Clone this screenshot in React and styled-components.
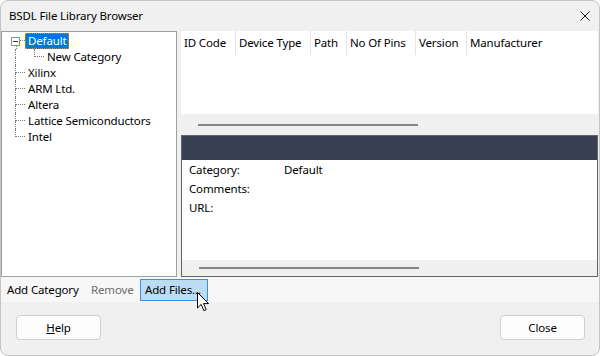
import React from "react";
import styled, { createGlobalStyle } from "styled-components";

const GlobalStyle = createGlobalStyle`
  html, body {
    margin: 0;
    padding: 0;
    background: #ffffff;
  }
  body {
    font-family: "Noto Sans", "Open Sans", sans-serif;
    font-size: 11.5px;
    letter-spacing: -0.15px;
    color: #000000;
  }
  * {
    box-sizing: border-box;
  }
`;

const columns = [
  { title: "ID Code", width: 55 },
  { title: "Device Type", width: 75 },
  { title: "Path", width: 36 },
  { title: "No Of Pins", width: 69 },
  { title: "Version", width: 51 },
  { title: "Manufacturer", width: 0 },
];

const topItems = ["Xilinx", "ARM Ltd.", "Altera", "Lattice Semiconductors", "Intel"];

const details = [
  { label: "Category:", value: "Default" },
  { label: "Comments:", value: "" },
  { label: "URL:", value: "" },
];

const App = () => {
  return (
    <>
      <GlobalStyle />
      <Window>
        <TitleBar>
          <Title>BSDL File Library Browser</Title>
          <CloseGlyph viewBox="0 0 10 10" aria-label="close">
            <path d="M0.5 0.5 L9.5 9.5 M9.5 0.5 L0.5 9.5" />
          </CloseGlyph>
        </TitleBar>

        <Main>
          <TreePanel>
            <TreeRow>
              <BoxCell>
                <ExpandBox>
                  <Minus />
                </ExpandBox>
                <Stem />
              </BoxCell>
              <Stub />
              <Label selected>Default</Label>
            </TreeRow>
            <TreeRow>
              <Gutter $indent={13}>
                <HalfTop $pipe />
                <HalfBottom $pipe />
              </Gutter>
              <Gutter $indent={9}>
                <HalfTop $pipe $branch />
                <HalfBottom />
              </Gutter>
              <Label>New Category</Label>
            </TreeRow>
            {topItems.map((name, i) => (
              <TreeRow key={name}>
                <Gutter $indent={13}>
                  <HalfTop $pipe $branch />
                  <HalfBottom $pipe={i < topItems.length - 1} />
                </Gutter>
                <Label>{name}</Label>
              </TreeRow>
            ))}
          </TreePanel>

          <RightPane>
            <ListView>
              <HeaderRow>
                {columns.map((c) => (
                  <HeaderCell key={c.title} $width={c.width}>
                    {c.title}
                  </HeaderCell>
                ))}
              </HeaderRow>
            </ListView>
            <ScrollStrip $height={21}>
              <Thumb />
            </ScrollStrip>

            <DetailPanel>
              <DetailHeader />
              <DetailBody>
                {details.map((d) => (
                  <DetailRow key={d.label}>
                    <DetailLabel>{d.label}</DetailLabel>
                    <span>{d.value}</span>
                  </DetailRow>
                ))}
              </DetailBody>
              <ScrollStrip $height={16}>
                <Thumb />
              </ScrollStrip>
            </DetailPanel>
          </RightPane>
        </Main>

        <Toolbar>
          <ToolItem $width={84}>Add Category</ToolItem>
          <ToolItem $width={54} disabled>
            Remove
          </ToolItem>
          <ToolItem $width={68} $hot>
            Add Files...
            <Cursor viewBox="0 0 13 20">
              <path d="M0.5 0.5 L0.5 16 L4.2 12.4 L6.8 18.6 L9.2 17.6 L6.6 11.6 L11.6 11.6 Z" />
            </Cursor>
          </ToolItem>
        </Toolbar>

        <Footer>
          <DialogButton>
            <u>H</u>elp
          </DialogButton>
          <DialogButton>Close</DialogButton>
        </Footer>
      </Window>
    </>
  );
};

const Window = styled.div`
  width: 600px;
  height: 356px;
  background: #f0f0f0;
  border: 1px solid #c4c4c4;
  border-radius: 8px;
  display: flex;
  flex-direction: column;
  overflow: hidden;
`;

const TitleBar = styled.div`
  height: 30px;
  flex: none;
  display: flex;
  align-items: center;
  justify-content: space-between;
  padding: 0 9px 1px 8px;
`;

const Title = styled.span`
  font-size: 11.5px;
`;

const CloseGlyph = styled.svg`
  width: 10px;
  height: 10px;
  stroke: #1a1a1a;
  stroke-width: 1;
  fill: none;
`;

const Main = styled.div`
  height: 246px;
  flex: none;
  display: flex;
  gap: 4px;
  padding: 0 1px 0 0;
`;

const TreePanel = styled.div`
  width: 176px;
  background: #ffffff;
  border: 1px solid #a0a0a0;
  padding-top: 1px;
  display: flex;
  flex-direction: column;
`;

const TreeRow = styled.div`
  height: 16px;
  display: flex;
  align-items: stretch;
`;

const lineColor = "#7a7a7a";

const BoxCell = styled.div`
  width: 9px;
  margin-left: 9px;
  display: flex;
  flex-direction: column;
  align-items: center;
  padding-top: 4px;
`;

const ExpandBox = styled.div`
  width: 9px;
  height: 9px;
  border: 1px solid #919191;
  background: #ffffff;
  display: flex;
  align-items: center;
  justify-content: center;
`;

const Minus = styled.div`
  width: 5px;
  height: 1px;
  background: #333333;
`;

const Stem = styled.div`
  flex: 1;
  width: 0;
  border-left: 1px dotted ${lineColor};
  margin-left: 1px;
`;

const Stub = styled.div`
  width: 5px;
  height: 8px;
  border-bottom: 1px dotted ${lineColor};
`;

const Gutter = styled.div`
  width: 10px;
  margin-left: ${(p) => p.$indent}px;
  display: flex;
  flex-direction: column;
`;

const HalfTop = styled.div`
  height: 8px;
  border-left: 1px dotted ${(p) => (p.$pipe ? lineColor : "transparent")};
  border-bottom: 1px dotted ${(p) => (p.$branch ? lineColor : "transparent")};
`;

const HalfBottom = styled.div`
  height: 8px;
  border-left: 1px dotted ${(p) => (p.$pipe ? lineColor : "transparent")};
`;

const Label = styled.span`
  height: 16px;
  line-height: 14px;
  padding: 0 2px;
  border: 1px ${(p) => (p.selected ? "dotted #e08a1e" : "solid transparent")};
  background: ${(p) => (p.selected ? "#0078d7" : "transparent")};
  color: ${(p) => (p.selected ? "#ffffff" : "#000000")};
  white-space: nowrap;
`;

const RightPane = styled.div`
  flex: 1;
  display: flex;
  flex-direction: column;
`;

const ListView = styled.div`
  height: 83px;
  background: #ffffff;
`;

const HeaderRow = styled.div`
  height: 24px;
  display: flex;
`;

const HeaderCell = styled.div`
  ${(p) => (p.$width ? `width: ${p.$width}px;` : "flex: 1;")}
  padding-left: 3px;
  line-height: 24px;
  border-right: 1px solid ${(p) => (p.$width ? "#e5e5e5" : "transparent")};
  white-space: nowrap;
`;

const ScrollStrip = styled.div`
  height: ${(p) => p.$height}px;
  background: #f0f0f0;
  display: flex;
  align-items: center;
  padding-left: 17px;
`;

const Thumb = styled.div`
  width: 220px;
  height: 2px;
  background: #858585;
`;

const DetailPanel = styled.div`
  flex: 1;
  border: 1px solid #646464;
  display: flex;
  flex-direction: column;
`;

const DetailHeader = styled.div`
  height: 24px;
  background: #373f51;
`;

const DetailBody = styled.div`
  height: 100px;
  background: #ffffff;
  padding: 0 7px;
  display: flex;
  flex-direction: column;
`;

const DetailRow = styled.div`
  height: 19px;
  display: flex;
  align-items: center;
`;

const DetailLabel = styled.span`
  width: 95px;
`;

const Toolbar = styled.div`
  height: 25px;
  flex: none;
  background: #f7f7f7;
  display: flex;
  align-items: center;
  padding-left: 1px;
`;

const ToolItem = styled.div`
  position: relative;
  width: ${(p) => p.$width}px;
  height: 22px;
  line-height: 20px;
  padding: 0 4px;
  border: 1px solid ${(p) => (p.$hot ? "#3d8ee5" : "transparent")};
  background: ${(p) => (p.$hot ? "#bcdcf4" : "transparent")};
  color: ${(p) => (p.disabled ? "#6d6d6d" : "#000000")};
  white-space: nowrap;
`;

const Cursor = styled.svg`
  position: absolute;
  left: 56px;
  top: 12px;
  width: 13px;
  height: 20px;
  fill: #ffffff;
  stroke: #000000;
  stroke-width: 1;
`;

const Footer = styled.div`
  flex: 1;
  display: flex;
  justify-content: space-between;
  align-items: flex-start;
  padding: 13px 14px 0 15px;
`;

const DialogButton = styled.button`
  width: 85px;
  height: 25px;
  background: #fdfdfd;
  border: 1px solid #d0d0d0;
  border-radius: 4px;
  font-family: inherit;
  font-size: 11.5px;
  letter-spacing: -0.15px;
  color: #000000;
  padding: 0;
`;

export default App;
